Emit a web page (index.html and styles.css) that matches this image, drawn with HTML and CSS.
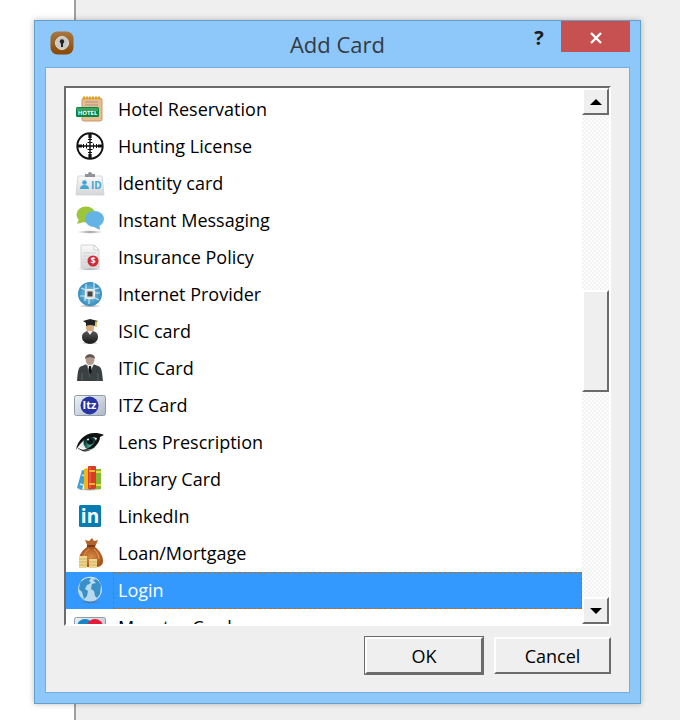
FILE: index.html
```html
<!DOCTYPE html>
<html lang="en">
<head>
<meta charset="utf-8">
<title>Add Card</title>
<link rel="stylesheet" href="styles.css">
</head>
<body>
<svg class="defs" aria-hidden="true">
  <defs>
    <linearGradient id="brown" x2="0" y2="1"><stop offset="0" stop-color="#a87844"/><stop offset="1" stop-color="#8a4704"/></linearGradient>
    <linearGradient id="paper" x2="0" y2="1"><stop offset="0" stop-color="#fafafa"/><stop offset="1" stop-color="#d3d5d8"/></linearGradient>
    <linearGradient id="plate" x2="1" y2="1"><stop offset="0" stop-color="#eef2f6"/><stop offset="1" stop-color="#aeb9c6"/></linearGradient>
    <linearGradient id="dark" x2="0" y2="1"><stop offset="0" stop-color="#5a5a5a"/><stop offset="1" stop-color="#171717"/></linearGradient>
    <radialGradient id="sphere"><stop offset="0" stop-color="#8fd0ee"/><stop offset="1" stop-color="#358dbd"/></radialGradient>
    <radialGradient id="shade"><stop offset="0" stop-color="#555" stop-opacity=".7"/><stop offset="1" stop-color="#777" stop-opacity="0"/></radialGradient>
    <radialGradient id="iris" cy=".75"><stop offset="0" stop-color="#59b5a5"/><stop offset="1" stop-color="#0c3a3c"/></radialGradient>
    <radialGradient id="sack"><stop offset="0" stop-color="#d88c45"/><stop offset="1" stop-color="#a8541c"/></radialGradient>
  </defs>
</svg>
<main class="dialog" role="dialog" aria-labelledby="dialog-title">
  <header class="caption">
    <svg class="app-icon" viewBox="0 0 24 24" aria-hidden="true"><rect x=".5" y=".5" width="23" height="23" rx="7" fill="url(#brown)"/><circle cx="12" cy="12" r="6.500" fill="#c9c9c9" stroke="#e9dfd2"/><circle cx="12" cy="10.500" r="2.200" fill="#222"/><path d="M12 11v5" stroke="#222" stroke-width="2"/></svg>
    <h1 class="title" id="dialog-title">Add Card</h1>
    <div class="window-buttons">
      <button class="help" type="button" aria-label="Help">?</button>
      <button class="close" type="button" aria-label="Close"><svg viewBox="0 0 14 12" aria-hidden="true"><path d="M2 1L12 11M12 1L2 11" stroke="#fff" stroke-width="2.400"/></svg></button>
    </div>
  </header>
  <div class="client">
    <div class="list-frame">
      <ul class="list" role="listbox" aria-label="Card type">
        <li class="row" role="option"><svg class="icon" viewBox="0 0 32 32"><rect x="8" y="4" width="20" height="23" rx="2" fill="#e7bd92" stroke="#cb956a"/><path d="M9 4h18" stroke="#dca51d" stroke-width="3" stroke-dasharray="2 1"/><path d="M11 8h13M11 11h13" stroke="#a99587"/><rect x="2" y="13" width="23" height="10" rx="1.500" fill="#078642"/><path d="M3 14h21v3H3z" fill="#39a25e"/><text x="13.500" y="20.500" text-anchor="middle" class="hotel-sign">HOTEL</text></svg><span class="label">Hotel Reservation</span></li>
        <li class="row" role="option"><svg class="icon" viewBox="0 0 32 32" fill="none" stroke="#111"><circle cx="16" cy="15" r="12.700" stroke-width="1.900"/><path d="M16 2v26M3 15h26" stroke-width="1.400"/><path d="M16 2v5M16 23v5M3 15h5M24 15h5" stroke-width="3.200"/><path d="M9.500 13v4M12.500 12.500v5M19.500 12.500v5M22.500 13v4M14 8.500h4M13.500 11.500h5M13.500 18.500h5M14 21.500h4" stroke-width="1"/></svg><span class="label">Hunting License</span></li>
        <li class="row" role="option"><svg class="icon" viewBox="0 0 32 32"><path d="M4 8h24l2 19H2z" fill="url(#paper)" stroke="#d3d7db"/><path d="M11 8V6h3a2 2 0 014 0h3v3H11z" fill="#8d9399"/><circle cx="10.500" cy="14.500" r="2.300" fill="#45a6d2"/><path d="M6 21c0-3 2-4 4.500-4s4.500 1 4.500 4z" fill="#45a6d2"/><text x="17" y="21" class="id-mark">ID</text></svg><span class="label">Identity card</span></li>
        <li class="row" role="option"><svg class="icon" viewBox="0 0 32 32"><ellipse cx="16" cy="27" rx="13" ry="1.800" fill="url(#shade)"/><path d="M5 14l-2 5 7-2z" fill="#9cc63c"/><ellipse cx="12" cy="9.500" rx="9.500" ry="8" fill="#9cc63c"/><path d="M20 22l6 3-1-6z" fill="#64b3e5"/><ellipse cx="20.500" cy="14" rx="9.500" ry="8" fill="#64b3e5"/></svg><span class="label">Instant Messaging</span></li>
        <li class="row" role="option"><svg class="icon" viewBox="0 0 32 32"><ellipse cx="16" cy="27" rx="13" ry="1.500" fill="url(#shade)"/><path d="M7 3h13l5 5v18H7z" fill="url(#paper)" stroke="#d4d4d4"/><path d="M20 3v5h5z" fill="#fff" stroke="#bbb" stroke-width=".7"/><path d="M9 11h13M9 14h8M9 17h5M9 20h4" stroke="#d0d0d0"/><circle cx="19" cy="19" r="5.500" fill="#d02a30"/><text x="19" y="22" text-anchor="middle" class="dollar">$</text></svg><span class="label">Insurance Policy</span></li>
        <li class="row" role="option"><svg class="icon" viewBox="0 0 32 32"><ellipse cx="16" cy="27" rx="12" ry="1.500" fill="url(#shade)"/><circle cx="16" cy="15" r="12" fill="url(#sphere)"/><path d="M7 9l5 2V5M20 4v6l5-1M6 17h5v5M21 19l4 2M15 20v5M21 14h5" fill="none" stroke="#c8e9f7" stroke-width="1.200"/><rect x="11.500" y="10.500" width="9" height="9" rx="1" fill="#ddd" stroke="#f4f4f4"/><rect x="13.500" y="12.500" width="5" height="5" fill="#444"/></svg><span class="label">Internet Provider</span></li>
        <li class="row" role="option"><svg class="icon" viewBox="0 0 32 32"><ellipse cx="16" cy="27" rx="9" ry="1.500" fill="url(#shade)"/><path d="M12 8h8v4c0 3-2 5-4 5s-4-2-4-5z" fill="#d8aa80"/><path d="M9 5l7-2 8 2-3 2v3q-5-2-9 0V7z" fill="#222"/><path d="M22 5v6" stroke="#d6a92b" stroke-width="1.400"/><path d="M8 21c0-4 3-5 5-6l3 3 3-3c3 1 5 2 5 6 0 9-16 9-16 0z" fill="url(#dark)"/><path d="M13.500 15l2.500 4 2.500-4" fill="#eee"/></svg><span class="label">ISIC card</span></li>
        <li class="row" role="option"><svg class="icon" viewBox="0 0 32 32"><path d="M3 28c1-10 1-14 5-15l5-2h6l5 2c4 1 4 6 5 15z" fill="#3a4143"/><path d="M12 11l4 8 4-8z" fill="#eee"/><path d="M15 13h2l.7 6-1.700 3-1.500-3z" fill="#111"/><path d="M11.500 4c0-4 9-4 9 0 0 5-1 8-4.500 8s-4.500-3-4.500-8z" fill="#b49b90"/><path d="M11 6c0-6 10-6 10 0l-1-1c-2-1-6-1-8 0z" fill="#5b5754"/><path d="M8 20v8M24 20v8M13 12l3 12" stroke="#697071" stroke-width=".7"/></svg><span class="label">ITIC Card</span></li>
        <li class="row" role="option"><svg class="icon" viewBox="0 0 32 32"><rect x=".5" y="5.500" width="31" height="20" rx="2" fill="url(#plate)" stroke="#8e9bab"/><circle cx="15.500" cy="15.500" r="9" fill="#2734a4"/><text x="15.500" y="19" text-anchor="middle" class="itz-mark">Itz</text></svg><span class="label">ITZ Card</span></li>
        <li class="row" role="option"><svg class="icon" viewBox="0 0 32 32"><path d="M4 19C8 11 18 7 25 11c-2 8-11 15-21 8z" fill="#e8eeec"/><circle cx="16" cy="16" r="6.500" fill="url(#iris)"/><circle cx="16" cy="14.500" r="3" fill="#041314"/><circle cx="14" cy="12.500" r="1" fill="#fff"/><path d="M2 23C4 11 15 2 30 8l-4 2c0 7-8 14-17 13 7-2 12-6 14-12C17 9 9 11 2 23z" fill="#111"/><path d="M3 20c5 4 11 4 15 2-5 4-11 3-15-2z" fill="#222"/></svg><span class="label">Lens Prescription</span></li>
        <li class="row" role="option"><svg class="icon" viewBox="0 0 32 32"><ellipse cx="16" cy="25.500" rx="14" ry="1.500" fill="url(#shade)"/><path d="M8 6l5 1-5 19-5-2z" fill="#3f9fcf"/><path d="M8 11l3 1M6 20l3 1" stroke="#c8e6f3" stroke-width="1.500"/><path d="M10 5l3-1 2 2v19h-5z" fill="#edb71a"/><rect x="14" y="2" width="8" height="23" rx="1" fill="#d83a24"/><path d="M16 3v21" stroke="#ed7456"/><path d="M15 7h6M15 20h6" stroke="#f5b332" stroke-width="2"/><path d="M22 5h5v20h-5z" fill="#81b82d"/><path d="M22 8h5M22 21h5" stroke="#ead94a" stroke-width="2"/></svg><span class="label">Library Card</span></li>
        <li class="row" role="option"><svg class="icon" viewBox="0 0 32 32"><rect x="5" y="4" width="22" height="22" rx="1.500" fill="#087cb1"/><text x="16" y="22" text-anchor="middle" class="in-mark">in</text></svg><span class="label">LinkedIn</span></li>
        <li class="row" role="option"><svg class="icon" viewBox="0 0 32 32"><path d="M11 2l4 1 3-3 2 3 4-1-3 7h-7z" fill="#b2632c"/><path d="M13 9h8c5 4 8 9 8 14 0 4-3 6-7 6H11c-4 0-6-3-6-7 0-6 4-10 8-13z" fill="url(#sack)"/><path d="M13 8h8" stroke="#7c3a14" stroke-width="2"/><path d="M15 11c-4 3-5 6-5 9M20 11c3 3 5 6 5 10" fill="none" stroke="#e8a260"/><path d="M5 18h8v12H5zM15 21h8v9h-8z" fill="#efd78c"/><path d="M5 21h8M5 24h8M5 27h8M15 24h8M15 27h8" stroke="#c9a862" stroke-width=".8"/></svg><span class="label">Loan/Mortgage</span></li>
        <li class="row selected" role="option" aria-selected="true"><svg class="icon" viewBox="0 0 32 32"><ellipse cx="16" cy="27" rx="11" ry="2" fill="url(#shade)"/><circle cx="16" cy="14.500" r="12" fill="#b9d9ef"/><path d="M6 8c3-5 8-6 11-5l-2 3 2 2-4 2-2 4 3 2-1 5-3 3-2-7-3-3zM19 5l4-1 4 6-1 9-3 4-2-2-1-5-3-2 1-5 4-1z" fill="#3a90c6"/><path d="M7 6c5-5 14-5 18 0" fill="none" stroke="#e0f2fb"/></svg><span class="label">Login</span></li>
        <li class="row" role="option"><svg class="icon" viewBox="0 0 32 32"><rect x=".5" y="5.500" width="31" height="20" rx="2" fill="url(#plate)" stroke="#8e9bab"/><circle cx="11" cy="15" r="8" fill="#1686c9"/><circle cx="21" cy="15" r="8" fill="#e51b3a"/></svg><span class="label">Maestro Card</span></li>
      </ul>
      <div class="scrollbar">
        <button class="scroll-part" type="button" aria-label="Scroll up"><svg viewBox="0 0 12 6" aria-hidden="true"><path d="M0 6L6 0l6 6z"/></svg></button>
        <div class="track-above"></div>
        <div class="thumb"></div>
        <div class="track-below"></div>
        <button class="scroll-part" type="button" aria-label="Scroll down"><svg viewBox="0 0 12 6" aria-hidden="true"><path d="M0 0l6 6 6-6z"/></svg></button>
      </div>
    </div>
    <footer class="actions">
      <button class="action default" type="button">OK</button>
      <button class="action" type="button">Cancel</button>
    </footer>
  </div>
</main>
</body>
</html>
```
FILE: styles.css
```css
* { box-sizing: border-box; }

body {
  margin: 0;
  height: 100vh;
  min-height: 400px;
  padding: 20px 39px 16px 34px;
  background: linear-gradient(to right, #fff 74px, #a0a0a0 74px, #a0a0a0 76px, #efefef 76px);
  font-family: "Open Sans", "Noto Sans", sans-serif;
  font-size: 18px;
  color: #000;
}

button {
  margin: 0;
  padding: 0;
  border: 0;
  font: inherit;
  color: inherit;
}

.defs { position: absolute; width: 0; height: 0; }

.dialog {
  height: 100%;
  display: flex;
  flex-direction: column;
  padding: 0 10px 10px;
  border: 1px solid #679fcb;
  background: #8ec8fb;
  box-shadow: 0 0 6px rgba(0, 0, 0, 0.25);
}

.caption {
  height: 46px;
  display: grid;
  grid-template-columns: 1fr auto 1fr;
}

.app-icon {
  width: 24px;
  height: 24px;
  margin: 10px 0 0 5px;
}

.title {
  margin: 0;
  font-size: 22px;
  font-weight: 400;
  line-height: 46px;
  color: #333b42;
}

.window-buttons {
  display: flex;
  justify-content: flex-end;
}

.help {
  width: 44px;
  height: 32px;
  background: none;
  font-size: 20px;
  font-weight: 700;
  color: #1c1c1c;
}

.close {
  width: 69px;
  height: 31px;
  background: #c75050;
}

.close svg { width: 14px; height: 12px; }

.client {
  flex: 1;
  min-height: 0;
  display: flex;
  flex-direction: column;
  padding: 18px 18px 17px;
  border: 1px solid #74aedb;
  background: #efefef;
}

.list-frame {
  flex: 1;
  min-height: 0;
  display: flex;
  border: 2px solid;
  border-color: #6b6b6b #fff #fff #6b6b6b;
  background: #fff;
}

.list {
  flex: 1;
  margin: 0;
  padding: 3px 0 0;
  list-style: none;
  overflow: hidden;
}

.row {
  height: 37px;
  display: flex;
  align-items: center;
  padding-left: 8px;
}

.icon { width: 32px; height: 32px; margin-right: 7px; }

.label {
  flex: 1;
  padding-left: 4px;
  border: 1px solid transparent;
  line-height: 35px;
}

.selected { background: #3399ff; color: #fff; }
.selected .label { border: 1px dashed #cc6600; }

.hotel-sign { font-size: 6px; font-weight: 700; fill: #fff; }
.id-mark { font-size: 10px; font-weight: 700; fill: #45a6d2; }
.dollar { font-size: 9px; font-weight: 700; fill: #fff; }
.itz-mark { font-size: 11px; font-weight: 700; fill: #fff; }
.in-mark { font-size: 19px; font-weight: 700; fill: #fff; }

.scrollbar {
  width: 27px;
  display: flex;
  flex-direction: column;
  background: repeating-conic-gradient(#f3f3f3 0 25%, #fcfcfc 0 50%) 0 0 / 4px 4px;
}

.scroll-part,
.thumb,
.action {
  border: 2px solid;
  border-color: #fff #6b6b6b #6b6b6b #fff;
  background: #efefef;
}

.scroll-part {
  height: 27px;
  display: grid;
  place-items: center;
}

.scroll-part svg { width: 12px; height: 6px; }

.track-above { flex: 176; }
.thumb { flex: 99; }
.track-below { flex: 207; }

.actions {
  display: flex;
  justify-content: flex-end;
  align-items: center;
  gap: 10px;
  padding-top: 10px;
}

.action {
  width: 117px;
  height: 37px;
}

.default {
  width: 120px;
  height: 39px;
  outline: 1px solid #6b6b6b;
  outline-offset: -1px;
  border-width: 3px;
}
```
